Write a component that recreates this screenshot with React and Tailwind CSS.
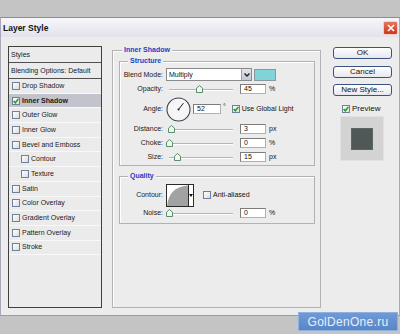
import React from "react";

const Check = ({ checked }) => (
  <span className="w-[8px] h-[8px] border border-[#6f809c] bg-[linear-gradient(135deg,#ffffff,#dcdcdc)] flex items-center justify-center shrink-0">
    {checked && (
      <svg width="6" height="6" viewBox="0 0 6 6">
        <path d="M0.6 3 L2.3 4.8 L5.4 0.9" fill="none" stroke="#1f9a1f" strokeWidth="1.5" />
      </svg>
    )}
  </span>
);

const Thumb = () => (
  <svg width="7" height="8" viewBox="0 0 7 8">
    <path d="M3.5 0.5 L6.5 3.2 L6.5 7.5 L0.5 7.5 L0.5 3.2 Z" fill="#eef6ef" stroke="#5b8c6a" strokeWidth="1" />
  </svg>
);

const Slider = ({ thumb }) => (
  <div className="relative w-[74px] h-[10px] shrink-0">
    <div className="absolute left-[3px] w-[64px] top-[5px] h-[2px] border-t border-[#b4b4b4] border-b border-b-white" />
    <div className={`absolute top-[1px] ${thumb}`}>
      <Thumb />
    </div>
  </div>
);

const Field = ({ v, w }) => (
  <div className={`${w} h-[10px] shrink-0 bg-white border border-[#b0b0b0] border-t-[#7c7c7c] border-l-[#7c7c7c] text-[7px] leading-[8px] pl-[3px] flex items-center`}>
    {v}
  </div>
);

const Label = ({ children }) => (
  <div className="w-[43px] shrink-0 text-right text-[7px] leading-[8px] text-[#1a1a1a]">{children}</div>
);

const ListRow = ({ text, checked, active, indent }) => (
  <div
    className={`h-[14.7px] flex items-center border-b border-[#f8f8f8] ${indent ? "pl-[12px]" : "pl-[3px]"} ${active ? "bg-[#c3c3cd]" : ""}`}
  >
    <Check checked={checked} />
    <span className={`ml-[2px] text-[7px] leading-[8px] text-[#1a1a1a] ${active ? "font-bold" : ""}`}>{text}</span>
  </div>
);

const Button = ({ children }) => (
  <div className="w-[59px] h-[12px] rounded-[3px] border border-[#3a5282] bg-[linear-gradient(#ffffff,#e6e6ee)] flex items-center justify-center text-[8px] leading-[8px] text-[#111]">
    {children}
  </div>
);

export default function App() {
  return (
    <div className="w-[400px] h-[334px] bg-[#c4c4c4] relative overflow-hidden font-['Liberation_Sans',Arial,sans-serif] text-[#111]">
      <div className="h-[17px]" />
      <div className="w-[400px] h-[299px] border border-t-[#8c8c9e] border-x-[#a8a8b8] border-b-[#9c9c9c] bg-[#ececec] flex flex-col">
        {/* Title bar */}
        <div className="h-[19px] shrink-0 flex items-center justify-between pl-[2px] pr-[1px] bg-[linear-gradient(#f6f6fa,#e2e2ec)]">
          <span className="text-[8.5px] font-bold leading-[10px] text-[#141414]">Layer Style</span>
          <div className="w-[15px] h-[14px] rounded-[2px] border border-[#f4d0c4] bg-[linear-gradient(#e8745a,#c8381c)] flex items-center justify-center">
            <svg width="8" height="8" viewBox="0 0 8 8">
              <path d="M1 1 L7 7 M7 1 L1 7" stroke="#fff" strokeWidth="1.6" />
            </svg>
          </div>
        </div>

        {/* Body */}
        <div className="flex pl-[7px] pt-[9px]">
          {/* Left list */}
          <div className="w-[94px] h-[262px] shrink-0 border border-[#404040] bg-[#ebebeb] flex flex-col">
            <div className="h-[16px] flex items-center pl-[2px] border-b border-[#505050] text-[7px] leading-[8px] text-[#1a1a1a]">
              Styles
            </div>
            <div className="h-[16px] flex items-center pl-[2px] border-b border-[#505050] text-[7px] leading-[8px] text-[#1a1a1a]">
              Blending Options: Default
            </div>
            <ListRow text="Drop Shadow" />
            <ListRow text="Inner Shadow" checked active />
            <ListRow text="Outer Glow" />
            <ListRow text="Inner Glow" />
            <ListRow text="Bevel and Emboss" />
            <ListRow text="Contour" indent />
            <ListRow text="Texture" indent />
            <ListRow text="Satin" />
            <ListRow text="Color Overlay" />
            <ListRow text="Gradient Overlay" />
            <ListRow text="Pattern Overlay" />
            <ListRow text="Stroke" />
          </div>

          {/* Middle */}
          <div className="ml-[10px] mt-[4px] w-[209px] h-[258px] shrink-0 border border-[#b2b2b2] shadow-[inset_1px_1px_0_#ffffff]">
            <div className="-mt-[5px] ml-[9px] px-[2px] w-fit bg-[#ececec] text-[7px] leading-[8px] font-bold text-[#2141c2]">
              Inner Shadow
            </div>

            {/* Structure */}
            <div className="mt-[7px] ml-[6px] w-[196px] h-[105px] border border-[#b2b2b2] shadow-[inset_1px_1px_0_#ffffff]">
              <div className="-mt-[5px] ml-[8px] px-[2px] w-fit bg-[#ececec] text-[7px] leading-[8px] font-bold text-[#2141c2]">
                Structure
              </div>
              <div className="mt-[2px] h-[15px] flex items-center">
                <Label>Blend Mode:</Label>
                <div className="ml-[3px] w-[86px] h-[13px] bg-white border border-[#8a8a8a] flex items-center justify-between">
                  <span className="pl-[2px] text-[7px] leading-[8px]">Multiply</span>
                  <div className="w-[10px] h-[11px] bg-[linear-gradient(#e2e4ec,#c4c8d4)] border-l border-[#9aa0b0] flex items-center justify-center">
                    <svg width="6" height="4" viewBox="0 0 6 4">
                      <path d="M0.5 0.5 L3 3 L5.5 0.5" fill="none" stroke="#1a1a1a" strokeWidth="1.3" />
                    </svg>
                  </div>
                </div>
                <div className="ml-[2px] w-[22px] h-[12px] bg-[#80d3d8] border border-[#8a9a9c]" />
              </div>
              <div className="h-[14px] flex items-center">
                <Label>Opacity:</Label>
                <div className="ml-[3px] flex items-center">
                  <Slider thumb="left-[30px]" />
                  <Field v="45" w="w-[26px]" />
                  <span className="ml-[3px] text-[7px] leading-[8px]">%</span>
                </div>
              </div>
              <div className="h-[26px] flex items-center">
                <Label>Angle:</Label>
                <svg className="ml-[3px] shrink-0" width="25" height="25" viewBox="0 0 25 25">
                  <circle cx="12.5" cy="12.5" r="11.5" fill="#f6f6f6" stroke="#3c4452" strokeWidth="1.1" />
                  <line x1="12.5" y1="12.5" x2="17.4" y2="6.2" stroke="#1a1a1a" strokeWidth="1" />
                  <circle cx="12.5" cy="12.5" r="1" fill="#1a1a1a" />
                </svg>
                <div className="ml-[2px]">
                  <Field v="52" w="w-[28px]" />
                </div>
                <span className="ml-[2px] self-start mt-[7px] text-[7px] leading-[8px]">°</span>
                <div className="ml-[6px] flex items-center">
                  <Check checked />
                  <span className="ml-[2px] text-[7px] leading-[8px]">Use Global Light</span>
                </div>
              </div>
              <div className="h-[14px] flex items-center">
                <Label>Distance:</Label>
                <div className="ml-[3px] flex items-center">
                  <Slider thumb="left-[2px]" />
                  <Field v="3" w="w-[26px]" />
                  <span className="ml-[3px] text-[7px] leading-[8px]">px</span>
                </div>
              </div>
              <div className="h-[14px] flex items-center">
                <Label>Choke:</Label>
                <div className="ml-[3px] flex items-center">
                  <Slider thumb="left-[0px]" />
                  <Field v="0" w="w-[26px]" />
                  <span className="ml-[3px] text-[7px] leading-[8px]">%</span>
                </div>
              </div>
              <div className="h-[13px] flex items-center">
                <Label>Size:</Label>
                <div className="ml-[3px] flex items-center">
                  <Slider thumb="left-[8px]" />
                  <Field v="15" w="w-[26px]" />
                  <span className="ml-[3px] text-[7px] leading-[8px]">px</span>
                </div>
              </div>
            </div>

            {/* Quality */}
            <div className="mt-[10px] ml-[6px] w-[196px] h-[48px] border border-[#b2b2b2] shadow-[inset_1px_1px_0_#ffffff]">
              <div className="-mt-[5px] ml-[8px] px-[2px] w-fit bg-[#ececec] text-[7px] leading-[8px] font-bold text-[#2141c2]">
                Quality
              </div>
              <div className="mt-[3px] h-[24px] flex items-center">
                <Label>Contour:</Label>
                <div className="ml-[3px] w-[28px] h-[23px] border border-[#2a2a2a] bg-white flex">
                  <svg width="21" height="21" viewBox="0 0 21 21" className="shrink-0">
                    <path d="M0 21 C1.5 9, 7 1.5, 21 0.5 L21 21 Z" fill="#a2a2a2" />
                  </svg>
                  <div className="flex-1 border-l border-[#2a2a2a] bg-white flex items-center justify-center">
                    <svg width="4" height="3" viewBox="0 0 4 3">
                      <path d="M0 0 L4 0 L2 3 Z" fill="#111" />
                    </svg>
                  </div>
                </div>
                <div className="ml-[9px] flex items-center">
                  <Check />
                  <span className="ml-[2px] text-[7px] leading-[8px]">Anti-aliased</span>
                </div>
              </div>
              <div className="h-[12px] flex items-center">
                <Label>Noise:</Label>
                <div className="ml-[3px] flex items-center">
                  <Slider thumb="left-[0px]" />
                  <Field v="0" w="w-[26px]" />
                  <span className="ml-[3px] text-[7px] leading-[8px]">%</span>
                </div>
              </div>
            </div>
          </div>

          {/* Right column */}
          <div className="ml-[12px] mt-[1px] w-[59px] flex flex-col">
            <Button>OK</Button>
            <div className="mt-[7px]">
              <Button>Cancel</Button>
            </div>
            <div className="mt-[6px]">
              <Button>New Style...</Button>
            </div>
            <div className="mt-[8px] ml-[9px] flex items-center">
              <Check checked />
              <span className="ml-[2px] text-[8px] leading-[9px]">Preview</span>
            </div>
            <div className="mt-[3px] ml-[7px] w-[44px] h-[45px] bg-[#d3d3d3] border border-[#e2e2e2] flex items-center justify-center">
              <div className="w-[22px] h-[22px] bg-[#4f5757] border border-[#5d6464]" />
            </div>
          </div>
        </div>
      </div>

      {/* Watermark */}
      <div className="absolute left-[298px] top-[312px] w-[100px] h-[19px] bg-[linear-gradient(#6f9ad4,#5786c8)] border border-[#8fb0e0] flex items-center justify-center text-[12px] leading-[14px] text-[#e4eeff] tracking-[0.3px]">
        GolDenOne.ru
      </div>
    </div>
  );
}
